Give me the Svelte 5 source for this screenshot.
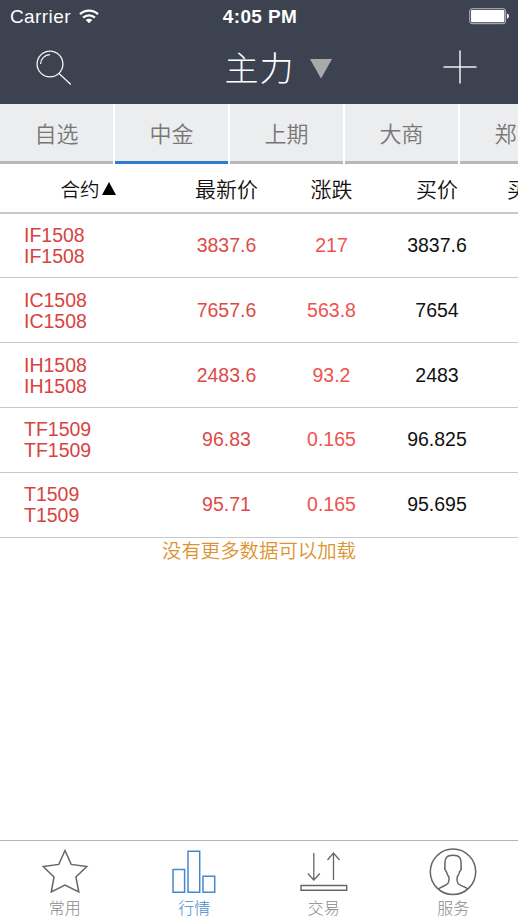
<script>
	let activeTab = $state('中金');

	const tabs = ['自选', '中金', '上期', '大商', '郑商'];
	const columns = ['最新价', '涨跌', '买价', '买量'];

	const quotes = [
		{ code: 'IF1508', last: '3837.6', change: '217', bid: '3837.6' },
		{ code: 'IC1508', last: '7657.6', change: '563.8', bid: '7654' },
		{ code: 'IH1508', last: '2483.6', change: '93.2', bid: '2483' },
		{ code: 'TF1509', last: '96.83', change: '0.165', bid: '96.825' },
		{ code: 'T1509', last: '95.71', change: '0.165', bid: '95.695' }
	];
</script>

<div class="screen">
	<header>
		<div class="status">
			<div class="carrier">
				<span>Carrier</span>
				<svg width="20" height="15" viewBox="0 0 20 15" fill="none" stroke="#fff" stroke-width="2.4">
					<path d="M1 5.2C6 .4 14 .4 19 5.2" />
					<path d="M4.1 8.6C7.4 5.6 12.6 5.6 15.9 8.6" />
					<path d="M10 14.2L6.7 11C8.6 9.3 11.4 9.3 13.3 11Z" fill="#fff" stroke="none" />
				</svg>
			</div>
			<span class="time">4:05 PM</span>
			<svg class="battery" width="41" height="17" viewBox="0 0 41 17">
				<rect x=".7" y=".7" width="36" height="15" rx="2.5" fill="none" stroke="#b9bcc1" />
				<rect x="2" y="2" width="33.4" height="12.2" rx="1" fill="#fff" />
				<path d="M38 5.5Q40 6 40 8T38 10.8Z" fill="#fff" />
			</svg>
		</div>
		<div class="nav">
			<svg class="search" width="36" height="36" viewBox="0 0 36 36" fill="none" stroke="#f4f5f6" stroke-width="1.3">
				<circle cx="14" cy="14" r="12.9" />
				<path d="M4.6 14A9.4 9.4 0 0 1 14 4.6M22.8 23.2L34.8 34.5" />
			</svg>
			<div class="title">
				<h1>主力</h1>
				<svg width="22" height="20" viewBox="0 0 22 20"><path d="M0 0H22L11 19.4Z" fill="#a9a9a9" /></svg>
			</div>
			<svg class="add" width="34" height="34" viewBox="0 0 34 34" stroke="#f0f0f1" stroke-width="1.5">
				<path d="M.5 16H33.5M17 -.5V32.5" />
			</svg>
		</div>
	</header>

	<div class="tabs">
		{#each tabs as tab}
			<button class:active={tab === activeTab} onclick={() => (activeTab = tab)}>{tab}</button>
		{/each}
	</div>

	<main>
		<div class="row head">
			<div class="contract">
				<span>合约</span>
				<svg width="14" height="13" viewBox="0 0 14 13"><path d="M0 13L7 0L14 13Z" /></svg>
			</div>
			{#each columns as column}
				<div class="cell">{column}</div>
			{/each}
		</div>
		{#each quotes as quote}
			<div class="row">
				<div class="names">
					<span>{quote.code}</span>
					<span>{quote.code}</span>
				</div>
				<div class="cell up">{quote.last}</div>
				<div class="cell up change">{quote.change}</div>
				<div class="cell">{quote.bid}</div>
			</div>
		{/each}
		<p class="end">没有更多数据可以加载</p>
	</main>

	<nav class="bottom">
		<div class="item">
			<svg width="48" height="48" viewBox="0 0 48 48" fill="none" stroke="#666" stroke-width="1.5">
				<path d="M24 3.5L30.2 17.4L45.8 19.5L34.9 30L37.8 45L24 38L10.3 45L13 30L2.2 19.5L17.8 17.4Z" />
			</svg>
			<span>常用</span>
		</div>
		<div class="item current">
			<svg width="48" height="48" viewBox="0 0 48 48" fill="none" stroke="#4588cb" stroke-width="1.5">
				<path d="M3 22.5H14.6V45.2H3ZM18 4.2H29.7V45.2H18ZM33 29.3H44.7V45.2H33Z" />
			</svg>
			<span>行情</span>
		</div>
		<div class="item">
			<svg width="48" height="48" viewBox="0 0 48 48" fill="none" stroke="#666" stroke-width="1.3">
				<path d="M13.8 6V33M7.8 26.5L13.8 33L19.8 26.5M33.5 33V6M27.5 13L33.5 6L39.5 13" />
				<path d="M1 38.5H46.7V43.3H1Z" stroke-width="1.4" />
			</svg>
			<span>交易</span>
		</div>
		<div class="item">
			<svg width="48" height="48" viewBox="0 0 48 48" fill="none" stroke="#666" stroke-width="1.5">
				<circle cx="24" cy="24.8" r="22.7" />
				<path d="M10 41.7C12 39.5 18 38.6 19.2 36C20.3 34 20.3 32.2 19.9 29.8C18.2 28.2 18 26.4 17.3 24.5C15.6 23 15.3 21.5 16 18.7C15.4 10 18.3 8.3 24 8.3S32.7 10 32 18.7C32.8 21.5 32.4 23 30.7 24.5C30 26.4 29.8 28.2 28.2 29.8C27.7 32.2 27.7 34 28.8 36C30 38.6 36 39.5 38.5 41.7" />
			</svg>
			<span>服务</span>
		</div>
	</nav>
</div>

<style>
	.screen {
		display: flex;
		flex-direction: column;
		width: 518px;
		height: 920px;
		overflow: hidden;
		background: #fff;
		color: #111;
		font-family: 'Liberation Sans', 'Noto Sans CJK SC', sans-serif;
	}

	svg {
		display: block;
		flex: none;
		overflow: visible;
	}

	header {
		height: 104px;
		flex: none;
		background: #3c424f;
		color: #fff;
	}

	.status {
		display: grid;
		grid-template-columns: 1fr auto 1fr;
		align-items: center;
		height: 33px;
		padding: 0 8px 0 10px;
		font-size: 19px;
	}

	.carrier {
		display: flex;
		align-items: center;
		gap: 8px;
		letter-spacing: 0.4px;
	}

	.time {
		font-weight: bold;
		letter-spacing: 0.4px;
	}

	.battery {
		justify-self: end;
	}

	.nav {
		display: grid;
		grid-template-columns: 1fr auto 1fr;
		align-items: center;
		height: 70px;
		padding: 0 41px 0 36px;
	}

	.title {
		display: flex;
		align-items: center;
		gap: 15px;
		padding: 2px 0 0 43px;
	}

	h1 {
		margin: 0;
		font-size: 34px;
		font-weight: 300;
		line-height: 50px;
		letter-spacing: 1px;
	}

	.add {
		justify-self: end;
	}

	.tabs {
		display: flex;
		gap: 2px;
		height: 60px;
		flex: none;
	}

	.tabs button {
		flex: none;
		width: 113px;
		padding: 0 0 1px;
		border: 0;
		border-bottom: 3px solid #b8b8b9;
		background: #ecedef;
		color: #777;
		font: inherit;
		font-size: 22px;
		font-weight: 350;
	}

	.tabs button.active {
		border-color: #2d7dcc;
	}

	main {
		flex: 1;
		overflow: hidden;
	}

	.row {
		display: grid;
		grid-template-columns: 174px 105px 105px 106px 76px;
		align-items: center;
		box-sizing: border-box;
		height: 64.8px;
		border-bottom: 1.5px solid #c8c8c8;
		font-size: 19.5px;
	}

	.row.head {
		height: 49.6px;
		border-bottom-width: 2px;
		font-size: 21px;
		font-weight: 350;
	}

	.contract {
		display: flex;
		align-items: center;
		justify-content: center;
		gap: 2px;
		padding: 1px 0 0 2px;
		font-size: 19.5px;
	}

	.cell {
		text-align: center;
		white-space: nowrap;
	}

	.names {
		display: flex;
		flex-direction: column;
		padding: 1px 0 0 24px;
		color: #d8433f;
		line-height: 21px;
	}

	.up {
		color: #dc4b48;
	}

	.change {
		color: #ee5350;
	}

	.end {
		margin: 0;
		color: #dc932f;
		font-size: 19.4px;
		font-weight: 350;
		line-height: 26px;
		text-align: center;
	}

	.bottom {
		display: flex;
		flex: none;
		box-sizing: border-box;
		height: 80px;
		border-top: 1px solid #b5b5b5;
	}

	.item {
		display: flex;
		flex: 1;
		flex-direction: column;
		align-items: center;
		padding-top: 6px;
		color: #888;
		font-size: 16px;
		font-weight: 300;
		line-height: 27px;
	}

	.item.current {
		color: #4588cb;
	}
</style>
